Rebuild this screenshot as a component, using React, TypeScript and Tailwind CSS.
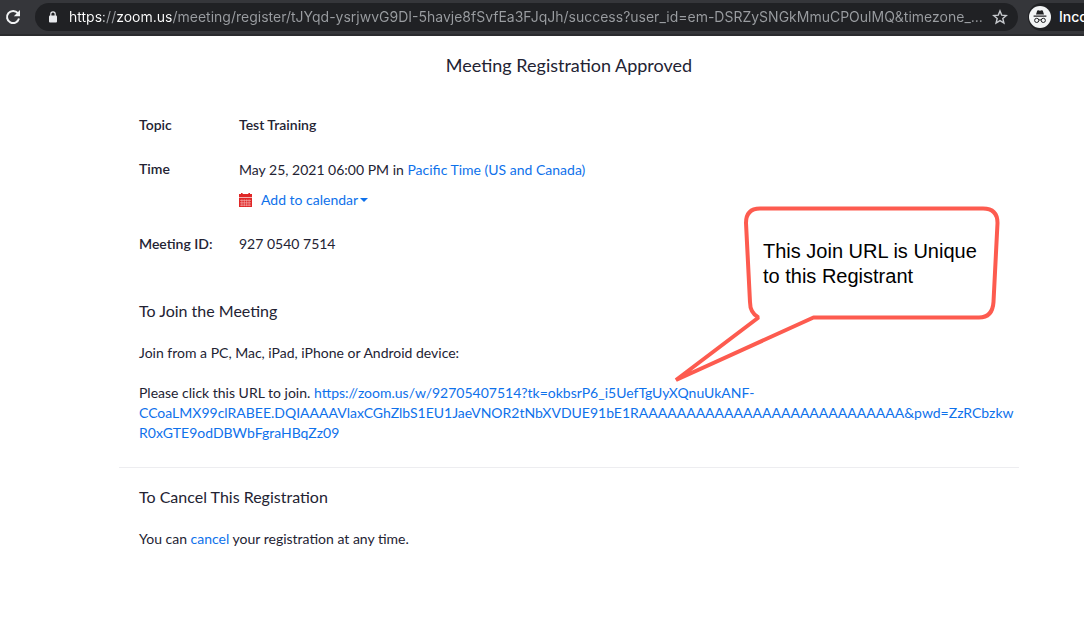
import type { ReactNode } from 'react';

const PAGE_URL =
  'https://zoom.us/meeting/register/tJYqd-ysrjwvG9DI-5havje8fSvfEa3FJqJh/success?user_id=em-DSRZySNGkMmuCPOulMQ&timezone_...';

const JOIN_URL =
  'https://zoom.us/w/92705407514?tk=okbsrP6_i5UefTgUyXQnuUkANF-CCoaLMX99clRABEE.DQIAAAAVlaxCGhZlbS1EU1JaeVNOR2tNbXVDUE91bE1RAAAAAAAAAAAAAAAAAAAAAAAAAAAA&pwd=ZzRCbzkwR0xGTE9odDBWbFgraHBqZz09';

function ReloadIcon() {
  return (
    <svg className="h-4 w-4" viewBox="0 0 16 16" fill="none">
      <path d="M12.9 4.2A6.1 6.1 0 1 0 14 9.6" stroke="#f1f3f4" strokeWidth="2" />
      <path d="M15 1v6.2H8.8z" fill="#f1f3f4" />
    </svg>
  );
}

function LockIcon() {
  return (
    <svg className="h-3 w-2.5 shrink-0" viewBox="0 0 10 12" fill="none">
      <rect x="1" y="4.4" width="8" height="7" rx="1" fill="#e8eaed" />
      <path d="M2.8 5V3a2.2 2.2 0 0 1 4.4 0v2" stroke="#e8eaed" strokeWidth="1.2" />
    </svg>
  );
}

function StarIcon() {
  return (
    <svg className="h-4 w-4" viewBox="0 0 16 16" fill="none" stroke="#c6c9cd" strokeWidth="1.4">
      <path d="M8 1.9l1.7 4.2 4.6.4-3.5 3 1.1 4.5L8 11.6 4.1 14l1.1-4.5-3.5-3 4.6-.4z" />
    </svg>
  );
}

function IncognitoIcon() {
  return (
    <svg className="h-[22px] w-[22px] shrink-0" viewBox="0 0 22 22" fill="none">
      <circle cx="11" cy="11" r="11" fill="#f1f3f4" />
      <path d="M7 8.4l1.1-3.5c.2-.6.7-.8 1.2-.6l1.7.5 1.7-.5c.5-.2 1 0 1.2.6L15 8.4z" fill="#202124" />
      <path d="M4.6 10.1h12.8" stroke="#202124" strokeWidth="1.2" />
      <circle cx="7.7" cy="14.4" r="2.1" stroke="#202124" strokeWidth="1" />
      <circle cx="14.3" cy="14.4" r="2.1" stroke="#202124" strokeWidth="1" />
      <path d="M9.8 14.1q1.2-.7 2.4 0" stroke="#202124" strokeWidth="1" />
    </svg>
  );
}

function CalendarIcon() {
  return (
    <svg className="h-[14px] w-[13px] shrink-0" viewBox="0 0 13 14">
      <path d="M0 1h2V0h1.600v1h5.800V0H11v1h2v3H0z" fill="#e02828" />
      <path d="M0 5h13v9H0z" fill="#e02828" />
      <path d="M0 4h13v1H0z" fill="#f4b5b5" />
      <path
        d="M1 7.4h11M1 9.8h11M1 12.2h11M2.9 6.4v6.800M5.3 6.4v6.800M7.7 6.4v6.800M10.1 6.4v6.800"
        stroke="#f6bcbc"
        strokeWidth="0.6"
      />
    </svg>
  );
}

function BrowserBar() {
  return (
    <header className="flex h-9 items-center overflow-hidden border-b-2 border-[#2a2b2e] bg-[#35363a] font-['Inter',sans-serif]">
      <button type="button" aria-label="Reload" className="flex w-[35px] shrink-0 pl-[5px]">
        <ReloadIcon />
      </button>
      <div className="flex h-7 min-w-0 flex-1 items-center rounded-full bg-[#202124] pr-2.5 pl-[13px]">
        <LockIcon />
        {/* scheme and host are brighter than the rest of the address */}
        <input
          type="text"
          aria-label="Address"
          readOnly
          value={PAGE_URL}
          className="ml-[11px] min-w-0 flex-1 bg-[linear-gradient(to_right,#fff_35px,#9a9da1_35px,#9a9da1_48px,#fff_48px,#fff_103px,#9a9da1_103px)] bg-clip-text text-sm text-transparent outline-none"
        />
        <button type="button" aria-label="Bookmark this page" className="shrink-0">
          <StarIcon />
        </button>
      </div>
      <div className="ml-2.5 flex h-7 w-14 shrink-0 items-center gap-2 overflow-hidden rounded-l-full bg-[#202124] pl-px text-sm font-medium whitespace-nowrap text-white">
        <IncognitoIcon />
        <span>Incognito</span>
      </div>
    </header>
  );
}

function DetailRow({ label, children }: { label: string; children: ReactNode }) {
  return (
    <div className="flex">
      <dt className="w-[100px] shrink-0 font-semibold">{label}</dt>
      <dd>{children}</dd>
    </div>
  );
}

function Callout() {
  return (
    <aside className="absolute top-[168px] right-[15px] h-[180px] w-[332px]">
      <svg className="absolute inset-0 h-full w-full" viewBox="0 0 332 180">
        <path
          d="M88 4.5H311Q325.5 4.5 325.5 19L321.5 98Q320.5 113.5 307 113.5H141.5L4 176L86.500 113.500Q78 109 78 98L74 19Q74 4.5 88 4.5Z"
          fill="#fff"
          stroke="#fd5b4f"
          strokeWidth="4"
          strokeLinejoin="bevel"
        />
      </svg>
      <p className="relative pt-[35px] pl-[91px] font-['Liberation_Sans',sans-serif] text-xl leading-[25px] whitespace-nowrap text-black">
        This Join URL is Unique
        <br />
        to this Registrant
      </p>
    </aside>
  );
}

export default function App() {
  return (
    <div className="min-h-screen bg-white font-['Lato',sans-serif] text-sm leading-5 text-[#232333]">
      <BrowserBar />
      <main className="relative mr-[65px] ml-[119px] max-w-[900px] pt-[17px] pb-8">
        <h1 className="text-center text-lg leading-6">Meeting Registration Approved</h1>

        <dl className="mt-[38px] flex flex-col gap-6 px-5">
          <DetailRow label="Topic">
            <span className="font-semibold">Test Training</span>
          </DetailRow>
          <DetailRow label="Time">
            <p className="leading-[22px]">
              May 25, 2021 06:00 PM in{' '}
              <a href="#timezone" className="text-[#0e71eb]">
                Pacific Time (US and Canada)
              </a>
            </p>
            <button type="button" className="mt-[9px] flex items-center text-[#0e71eb]">
              <CalendarIcon />
              <span className="ml-[9px]">Add to calendar</span>
              <svg className="ml-0.5 h-1 w-2" viewBox="0 0 8 4">
                <path d="M0 0h8L4 4z" fill="currentColor" />
              </svg>
            </button>
          </DetailRow>
          <DetailRow label="Meeting ID:">927 0540 7514</DetailRow>
        </dl>

        <section className="mt-[45px] border-b border-[#ededf0] pb-6 pl-5">
          <h2 className="text-base leading-6">To Join the Meeting</h2>
          <p className="mt-5">Join from a PC, Mac, iPad, iPhone or Android device:</p>
          <p className="mt-5 wrap-break-word">
            Please click this URL to join.{' '}
            <a href="#join" className="text-[#0e71eb]">
              {JOIN_URL}
            </a>
          </p>
        </section>

        <section className="mt-[17px] pl-5">
          <h2 className="text-base leading-6">To Cancel This Registration</h2>
          <p className="mt-5">
            You can{' '}
            <a href="#cancel" className="text-[#0e71eb]">
              cancel
            </a>{' '}
            your registration at any time.
          </p>
        </section>

        <Callout />
      </main>
    </div>
  );
}
